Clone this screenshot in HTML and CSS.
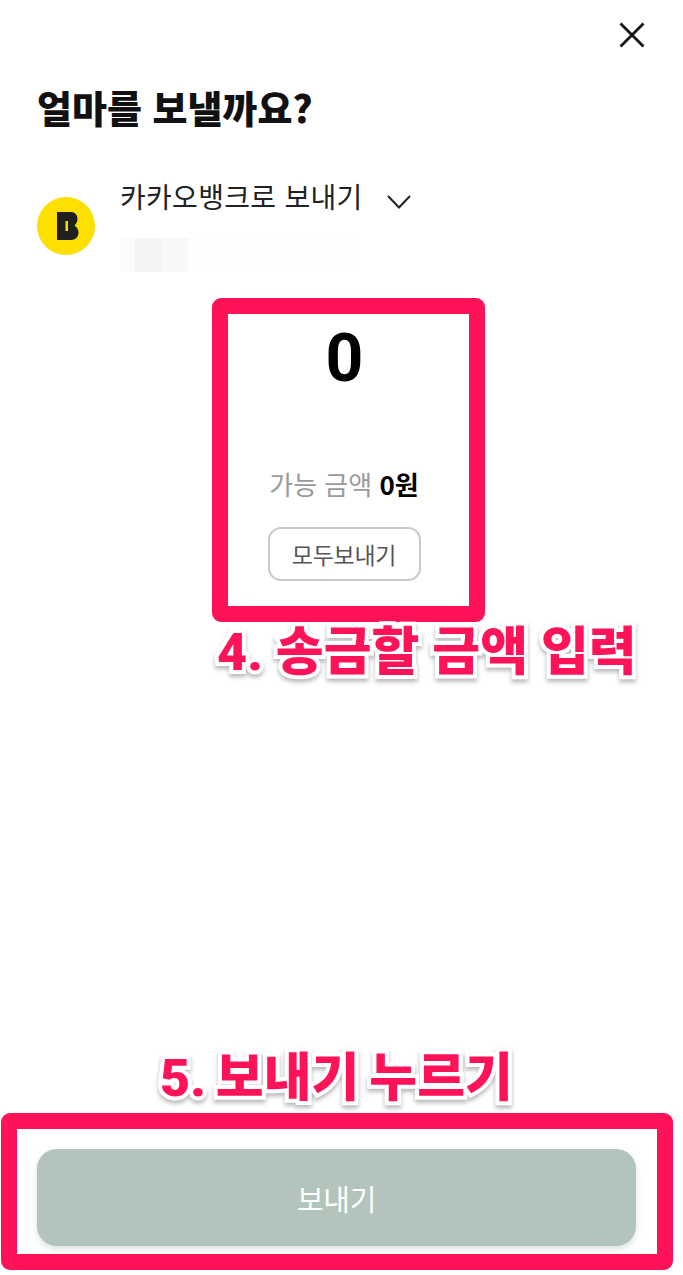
FILE: index.html
```html
<!DOCTYPE html>
<html lang="ko">
<head>
<meta charset="utf-8">
<title>얼마를 보낼까요?</title>
<link rel="stylesheet" href="styles.css">
</head>
<body>
<main class="screen">
  <header class="topbar">
    <button class="close" aria-label="닫기">
      <svg viewBox="0 0 26 26" width="26" height="26"><path d="M1.5 1.5 24.5 24.5M24.5 1.5 1.5 24.5" fill="none" stroke="#111" stroke-width="2.8"/></svg>
    </button>
  </header>
  <h1 class="title">얼마를 보낼까요?</h1>
  <section class="account">
    <div class="bank-logo">
      <svg viewBox="0 0 58 58" width="58" height="58">
        <circle cx="29" cy="29" r="29" fill="#fde000"/>
        <path fill-rule="evenodd" fill="#1f2020" d="M20 15H34C38 15 40.500 18 40.500 22C40.500 25 39 27 37.500 28.500C39.500 30 41.500 32 41.500 35.500C41.500 40 38.500 43 34 43H20ZM28.500 24V34H31V24Z"/>
      </svg>
    </div>
    <div class="account-text">
      <div class="account-name">
        <span>카카오뱅크로 보내기</span>
        <svg class="chevron" viewBox="0 0 24 14" width="24" height="14"><path d="M1 1 12 12.500 23 1" fill="none" stroke="#222" stroke-width="2"/></svg>
      </div>
      <div class="account-masked">
        <i class="mask mask-a"></i><i class="mask mask-b"></i><i class="mask mask-c"></i><i class="mask mask-d"></i>
      </div>
    </div>
  </section>
  <section class="amount">
    <div class="amount-value">0</div>
    <p class="available">가능 금액 <b>0원</b></p>
    <button class="send-all">모두보내기</button>
  </section>
  <footer class="bottom">
    <button class="send">보내기</button>
  </footer>
</main>

<div class="marker marker-amount"></div>
<div class="callout callout-amount">4. 송금할 금액 입력</div>
<div class="callout callout-send">5. 보내기 누르기</div>
<div class="marker marker-send"></div>
</body>
</html>
```
FILE: styles.css
```css
* { box-sizing: border-box; }
html, body { margin: 0; padding: 0; }
body {
  position: relative;
  width: 683px;
  height: 1275px;
  overflow: hidden;
  background: #fff;
  font-family: "Noto Sans CJK KR", "Noto Sans", sans-serif;
  color: #111;
}
button { font-family: inherit; background: none; border: 0; padding: 0; }

.screen {
  display: flex;
  flex-direction: column;
  height: 1275px;
  padding: 0 37px;
}
.topbar {
  display: flex;
  justify-content: flex-end;
  padding: 22px 1px 0 0;
  height: 84px;
}
.close { width: 26px; height: 26px; display: block; }
.close svg { display: block; }

.title {
  margin: 0;
  font-size: 38px;
  line-height: 46px;
  font-weight: 800;
  color: #111;
}

.account {
  display: flex;
  align-items: flex-start;
  gap: 25px;
  margin-top: 51px;
}
.bank-logo { margin-top: 16px; width: 58px; height: 58px; flex: none; }
.bank-logo svg { display: block; }
.account-name {
  display: flex;
  align-items: center;
  height: 30px;
  font-size: 28px;
  line-height: 30px;
  letter-spacing: 0.3px;
  color: #222;
}
.chevron { margin: 12px 0 0 24px; }
.account-masked {
  display: flex;
  margin-top: 27px;
  height: 34px;
}
.mask { display: block; height: 34px; }
.mask-a { width: 15px; background: #fbfbfb; }
.mask-b { width: 26px; background: #f4f4f4; }
.mask-c { width: 27px; background: #f8f8f8; }
.mask-d { width: 172px; background: #fefefe; }

.amount {
  display: flex;
  flex-direction: column;
  align-items: center;
  margin-top: 47px;
}
.amount-value {
  font-family: Roboto, sans-serif;
  font-size: 66px;
  line-height: 80px;
  font-weight: 700;
  color: #000;
  margin-left: 6px;
}
.available {
  margin: 67px 0 0 5px;
  font-size: 26px;
  line-height: 36px;
  color: #9a9a9a;
}
.available b { color: #000; font-weight: 700; }
.send-all {
  margin-top: 25px;
  margin-left: 5px;
  width: 153px;
  height: 54px;
  border: 2px solid #c9c9c9;
  border-radius: 13px;
  font-size: 23px;
  color: #555;
  letter-spacing: -0.3px;
}

.bottom { margin-top: auto; padding-bottom: 29px; }
.send {
  display: block;
  width: 599px;
  height: 97px;
  border-radius: 20px;
  background: #b3c4bd;
  box-shadow: 0 3px 6px rgba(120, 140, 130, 0.25);
  color: #fff;
  font-size: 29px;
  letter-spacing: -0.3px;
}

.marker {
  position: absolute;
  border: 16px solid #ff1358;
  border-radius: 9px;
}
.marker-amount { left: 212px; top: 298px; width: 273px; height: 324px; }
.marker-send { left: 1px; top: 1113px; width: 672px; height: 157px; }

.callout {
  position: absolute;
  white-space: nowrap;
  font-family: Roboto, "Noto Sans CJK KR", sans-serif;
  font-weight: 900;
  font-size: 52px;
  line-height: 64px;
  color: #ff1358;
  -webkit-text-stroke: 8px #fff;
  paint-order: stroke fill;
  filter: drop-shadow(0 3px 2px rgba(0, 0, 0, 0.28));
}
.callout-amount { left: 217px; top: 621px; }
.callout-send { left: 160px; top: 1047px; word-spacing: -3px; }
```
